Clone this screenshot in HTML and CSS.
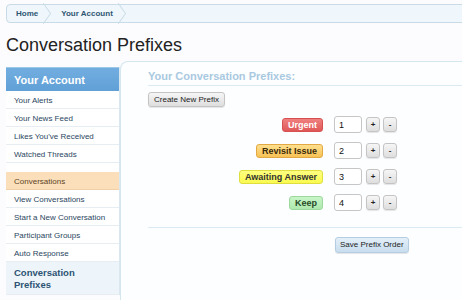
FILE: index.html
```html
<!DOCTYPE html>
<html lang="en">
<head>
    <meta charset="UTF-8">
    <meta name="viewport" content="width=device-width, initial-scale=1.0">
    <title>Conversation Prefixes</title>
    <link rel="stylesheet" href="styles.css">
</head>
<body>
    <div class="page">
        <div class="breadcrumb">
            <a class="crumb" href="#">Home</a>
            <a class="crumb" href="#">Your Account</a>
        </div>

        <h1 class="title">Conversation Prefixes</h1>

        <div class="layout">
            <div class="sidebar">
                <div class="side-head">Your Account</div>
                <a class="side-item" href="#">Your Alerts</a>
                <a class="side-item" href="#">Your News Feed</a>
                <a class="side-item" href="#">Likes You've Received</a>
                <a class="side-item" href="#">Watched Threads</a>

                <div class="side-group">Conversations</div>
                <a class="side-item" href="#">View Conversations</a>
                <a class="side-item" href="#">Start a New Conversation</a>
                <a class="side-item" href="#">Participant Groups</a>
                <a class="side-item" href="#">Auto Response</a>
                <a class="side-item selected" href="#">Conversation Prefixes</a>
            </div>

            <div class="panel">
                <h2 class="panel-title">Your Conversation Prefixes:</h2>
                <button class="button">Create New Prefix</button>

                <div class="prefixes">
                    <div class="prefix-row">
                        <span class="prefix red">Urgent</span>
                        <input class="order" type="text" value="1">
                        <button class="button small">+</button>
                        <button class="button small">-</button>
                    </div>
                    <div class="prefix-row">
                        <span class="prefix orange">Revisit Issue</span>
                        <input class="order" type="text" value="2">
                        <button class="button small">+</button>
                        <button class="button small">-</button>
                    </div>
                    <div class="prefix-row">
                        <span class="prefix yellow">Awaiting Answer</span>
                        <input class="order" type="text" value="3">
                        <button class="button small">+</button>
                        <button class="button small">-</button>
                    </div>
                    <div class="prefix-row">
                        <span class="prefix green">Keep</span>
                        <input class="order" type="text" value="4">
                        <button class="button small">+</button>
                        <button class="button small">-</button>
                    </div>
                </div>

                <div class="submit-row">
                    <button class="button primary">Save Prefix Order</button>
                </div>
            </div>
        </div>
    </div>
</body>
</html>
```

FILE: styles.css
```css
body {
    margin: 0;
    font-family: "Liberation Sans", Arial, sans-serif;
    background-color: #fcfcff;
    color: #222;
    overflow: hidden;
}
.page {
    padding: 4px 0 0 6px;
}
.breadcrumb {
    display: flex;
    height: 17px;
    margin-right: -20px;
    background-color: #eff7fc;
    border: 1px solid #c9dbe6;
    border-radius: 4px 0 0 4px;
}
.crumb {
    position: relative;
    display: flex;
    align-items: center;
    padding: 0 14px 0 9px;
    font-size: 8px;
    font-weight: bold;
    color: #2f5672;
    text-decoration: none;
}
.crumb::after {
    content: "";
    position: absolute;
    right: 2px;
    top: 2px;
    width: 12px;
    height: 12px;
    border-top: 1px solid #c9dbe6;
    border-right: 1px solid #c9dbe6;
    transform: rotate(45deg) skew(10deg, 10deg);
}
.title {
    margin: 10px 0 0 0;
    font-size: 18px;
    line-height: 24px;
    font-weight: normal;
    color: #222;
}
.layout {
    display: flex;
    align-items: flex-start;
    margin-top: 4px;
    height: 240px;
}
.sidebar {
    width: 113px;
    margin-top: 6px;
    border-right: 1px solid #dbe7ef;
    background-color: #fff;
}
.side-head {
    height: 24px;
    line-height: 24px;
    padding-left: 8px;
    font-size: 11px;
    font-weight: bold;
    color: #fff;
    background: linear-gradient(#72ade0, #60a0d6);
    border-top: 1px solid #9cc9ea;
    box-sizing: border-box;
}
.side-item {
    display: block;
    height: 18px;
    line-height: 19px;
    padding-left: 8px;
    font-size: 8px;
    color: #2a4660;
    text-decoration: none;
    border-bottom: 1px solid #e6eef4;
    box-sizing: border-box;
}
.side-group {
    height: 18px;
    line-height: 19px;
    margin-top: 9px;
    padding-left: 8px;
    font-size: 8px;
    color: #5e4426;
    background-color: #fadfba;
    border-bottom: 1px solid #f0d0a8;
    box-sizing: border-box;
}
.side-item.selected {
    height: 33px;
    line-height: 12px;
    padding-top: 5px;
    padding-right: 30px;
    font-size: 9.5px;
    font-weight: bold;
    color: #2c5373;
    background-color: #eef5fa;
}
.panel {
    flex: 1;
    height: 100%;
    margin-right: -20px;
    padding: 7px 0 0 27px;
    border-top: 1px solid #d4e6ee;
    border-left: 1px solid #d4e6ee;
    border-radius: 8px 0 0 0;
    background-color: #fdfeff;
}
.panel-title {
    margin: 0;
    padding-bottom: 1px;
    font-size: 11px;
    line-height: 15px;
    color: #a9c9e1;
    border-bottom: 1px solid #dbeaf3;
}
.button {
    font-family: "Liberation Sans", Arial, sans-serif;
    font-size: 8px;
    color: #222;
    height: 15px;
    padding: 0 5px;
    border: 1px solid #c4c4c4;
    border-radius: 3px;
    background: linear-gradient(#f6f6f6, #dedede);
    box-shadow: 0 1px 1px rgba(0, 0, 0, 0.1);
}
.panel > .button {
    margin-top: 6px;
}
.button.small {
    width: 14px;
    padding: 0;
    margin-left: 3px;
    font-size: 8px;
    font-weight: bold;
}
.button.primary {
    height: 16px;
    padding: 0 4px;
    border-color: #b4cde0;
    background: linear-gradient(#e4f0f9, #c8ddee);
}
.prefixes {
    display: flex;
    flex-direction: column;
    gap: 9px;
    margin-top: 9px;
    padding-bottom: 16px;
    border-bottom: 1px solid #dbeaf3;
}
.prefix-row {
    display: grid;
    grid-template-columns: 186px 28px auto auto;
    justify-content: start;
    align-items: center;
}
.prefix {
    justify-self: end;
    margin-right: 11px;
    height: 14px;
    line-height: 13px;
    padding: 0 5px;
    font-size: 9px;
    font-weight: bold;
    border-radius: 3px;
    box-sizing: border-box;
}
.prefix.red {
    color: #fff;
    background: linear-gradient(#f08080, #e05858);
    border: 1px solid #d65050;
}
.prefix.orange {
    color: #3a2a08;
    background: linear-gradient(#ffe08e, #f8c255);
    border: 1px solid #e2a844;
}
.prefix.yellow {
    color: #333;
    background: linear-gradient(#ffff80, #fafa50);
    border: 1px solid #dede40;
}
.prefix.green {
    color: #284a28;
    background: linear-gradient(#c8f5c8, #aee8ae);
    border: 1px solid #9cd89c;
}
.order {
    width: 28px;
    height: 17px;
    padding: 0 4px;
    font-family: "Liberation Sans", Arial, sans-serif;
    font-size: 9px;
    color: #111;
    border: 1px solid #c6c6c6;
    border-radius: 3px;
    background-color: #fff;
    box-sizing: border-box;
}
.order + .button.small {
    margin-left: 4px;
}
.submit-row {
    padding: 5px 0 0 187px;
}
```
